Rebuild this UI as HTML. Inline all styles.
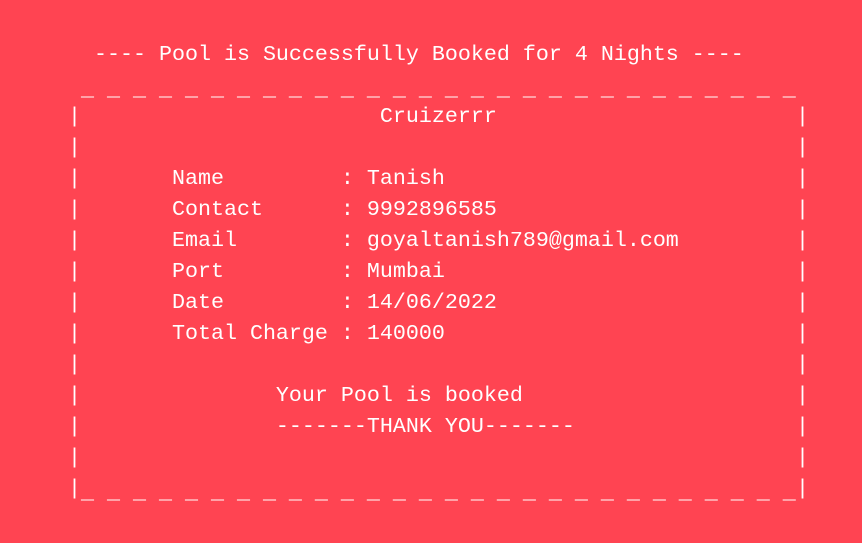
<!DOCTYPE html>
<html><head><meta charset="utf-8"><style>
html,body{margin:0;padding:0;background:#ff4452;width:862px;height:543px;overflow:hidden}
pre{position:absolute;top:39px;margin:0;font-family:"Liberation Mono","DejaVu Sans Mono",monospace;font-size:21.67px;line-height:31px;color:#fff}
.u{position:relative;top:4px}
</style></head><body>
<pre style="left:68px">  ---- Pool is Successfully Booked for 4 Nights ----
<span class="u"> _ _ _ _ _ _ _ _ _ _ _ _ _ _ _ _ _ _ _ _ _ _ _ _ _ _ _ _</span>
|                       Cruizerrr
|
|       Name         : Tanish
|       Contact      : 9992896585
|       Email        : goyaltanish789@gmail.com
|       Port         : Mumbai
|       Date         : 14/06/2022
|       Total Charge : 140000
|
|               Your Pool is booked
|               -------THANK YOU-------
|
|<span class="u">_ _ _ _ _ _ _ _ _ _ _ _ _ _ _ _ _ _ _ _ _ _ _ _ _ _ _ _</span></pre>
<pre style="left:796px">&nbsp;
&nbsp;
|
|
|
|
|
|
|
|
|
|
|
|
|</pre>
</body></html>
